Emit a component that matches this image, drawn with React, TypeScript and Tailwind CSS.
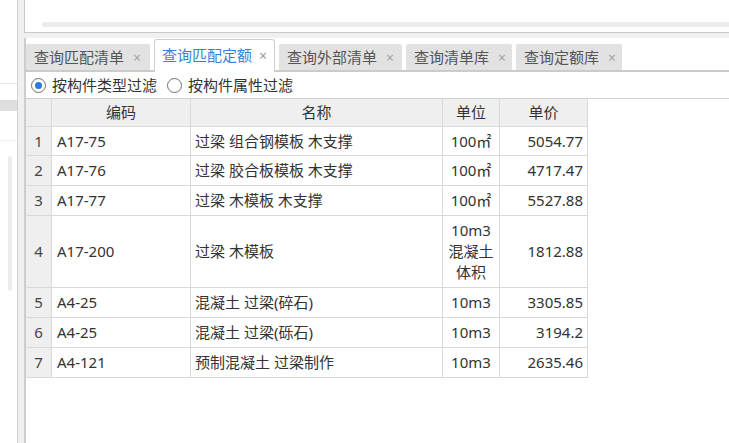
import React from "react";

type Row = {
    n: number;
    code: string;
    name: string;
    unit: string[];
    price: string;
    h: string;
};

const ROWS: Row[] = [
    { n: 1, code: "A17-75", name: "过梁 组合钢模板 木支撑", unit: ["100㎡"], price: "5054.77", h: "h-[29px]" },
    { n: 2, code: "A17-76", name: "过梁 胶合板模板 木支撑", unit: ["100㎡"], price: "4717.47", h: "h-[30px]" },
    { n: 3, code: "A17-77", name: "过梁 木模板 木支撑", unit: ["100㎡"], price: "5527.88", h: "h-[30px]" },
    { n: 4, code: "A17-200", name: "过梁 木模板", unit: ["10m3", "混凝土", "体积"], price: "1812.88", h: "h-[72px]" },
    { n: 5, code: "A4-25", name: "混凝土 过梁(碎石)", unit: ["10m3"], price: "3305.85", h: "h-[30px]" },
    { n: 6, code: "A4-25", name: "混凝土 过梁(砾石)", unit: ["10m3"], price: "3194.2", h: "h-[30px]" },
    { n: 7, code: "A4-121", name: "预制混凝土 过梁制作", unit: ["10m3"], price: "2635.46", h: "h-[30px]" },
];

const TABS = [
    { label: "查询匹配清单", w: "w-[124px]" },
    { label: "查询匹配定额", w: "w-[121px]", active: true },
    { label: "查询外部清单", w: "w-[123px]" },
    { label: "查询清单库", w: "w-[106px]" },
    { label: "查询定额库", w: "w-[106px]" },
];

const cols = "grid grid-cols-[26px_139px_252px_57px_88px]";
const cell = "flex items-center border-r border-b border-[#d9d9d9]";

function Radio({ checked, label }: { checked?: boolean; label: string }) {
    return (
        <label className="flex items-center gap-[6px]">
            <span className="flex h-[15px] w-[15px] items-center justify-center rounded-full border border-[#6f6f6f] bg-white">
                {checked && <span className="h-[7px] w-[7px] rounded-full bg-[#2a7ae2]" />}
            </span>
            <span>{label}</span>
        </label>
    );
}

export default function App() {
    return (
        <div className="flex h-[443px] w-[729px] overflow-hidden bg-[#f0f0f0] font-['Noto_Sans','Noto_Sans_CJK_SC',sans-serif] text-[15px] text-[#333]">
            {/* left dock panel */}
            <div className="flex w-[18px] flex-col border-r border-[#d2d2d2] bg-white">
                <div className="h-[84px] border-b border-[#e6e6e6]" />
                <div className="mt-[16px] h-[11px] bg-[#dedede]" />
                <div className="h-[30px] border-b border-[#f0f0f0]" />
                <div className="ml-[8px] mt-[15px] h-[135px] w-[4px] rounded-full bg-[#ececec]" />
            </div>

            <div className="ml-[6px] flex flex-1 flex-col">
                {/* top box */}
                <div className="flex h-[33px] flex-col border-b border-l border-[#c8c8c8] bg-white">
                    <div className="ml-[17px] mt-[22px] h-[5px] rounded-l-full bg-[#ebebeb]" />
                </div>
                <div className="h-[5px]" />

                <div className="flex flex-1 flex-col border-l-2 border-[#cdcdcd] bg-white">
                    {/* tabs */}
                    <div className="flex h-[34px] items-end gap-[4px] border-b-2 border-[#cbcbcb]">
                        {TABS.map((t) =>
                            t.active ? (
                                <div
                                    key={t.label}
                                    className={`${t.w} relative -mb-[2px] flex h-[33px] items-center rounded-t-[3px] border border-b-0 border-[#cfcfcf] bg-white pb-[2px] pl-[7px] text-[#3a7fd9]`}
                                >
                                    <span>{t.label}</span>
                                    <span className="ml-[7px] text-[14px] text-[#9a9a9a]">×</span>
                                </div>
                            ) : (
                                <div
                                    key={t.label}
                                    className={`${t.w} flex h-[26px] items-center rounded-t-[2px] bg-[#e2e2e2] pl-[8px] text-[#555]`}
                                >
                                    <span>{t.label}</span>
                                    <span className="ml-[9px] text-[14px] text-[#a5a5a5]">×</span>
                                </div>
                            )
                        )}
                    </div>

                    {/* filter radios */}
                    <div className="flex h-[27px] items-center gap-[10px] border-b border-[#cfcfcf] pl-[5px]">
                        <Radio checked label="按构件类型过滤" />
                        <Radio label="按构件属性过滤" />
                    </div>

                    {/* result grid */}
                    <div className="w-[562px]">
                        <div className={`${cols} h-[28px] bg-[#efefef]`}>
                            <div className={cell} />
                            <div className={`${cell} justify-center`}>编码</div>
                            <div className={`${cell} justify-center`}>名称</div>
                            <div className={`${cell} justify-center`}>单位</div>
                            <div className={`${cell} justify-center`}>单价</div>
                        </div>
                        {ROWS.map((r) => (
                            <div key={r.n} className={`${cols} ${r.h}`}>
                                <div className={`${cell} justify-center bg-[#efefef] text-[#444]`}>{r.n}</div>
                                <div className={`${cell} pl-[5px]`}>{r.code}</div>
                                <div className={`${cell} pl-[4px]`}>{r.name}</div>
                                <div className={`${cell} flex-col justify-center text-center leading-[21px]`}>
                                    {r.unit.map((u) => (
                                        <span key={u}>{u}</span>
                                    ))}
                                </div>
                                <div className={`${cell} justify-end pr-[4px]`}>{r.price}</div>
                            </div>
                        ))}
                    </div>
                </div>
            </div>
        </div>
    );
}
